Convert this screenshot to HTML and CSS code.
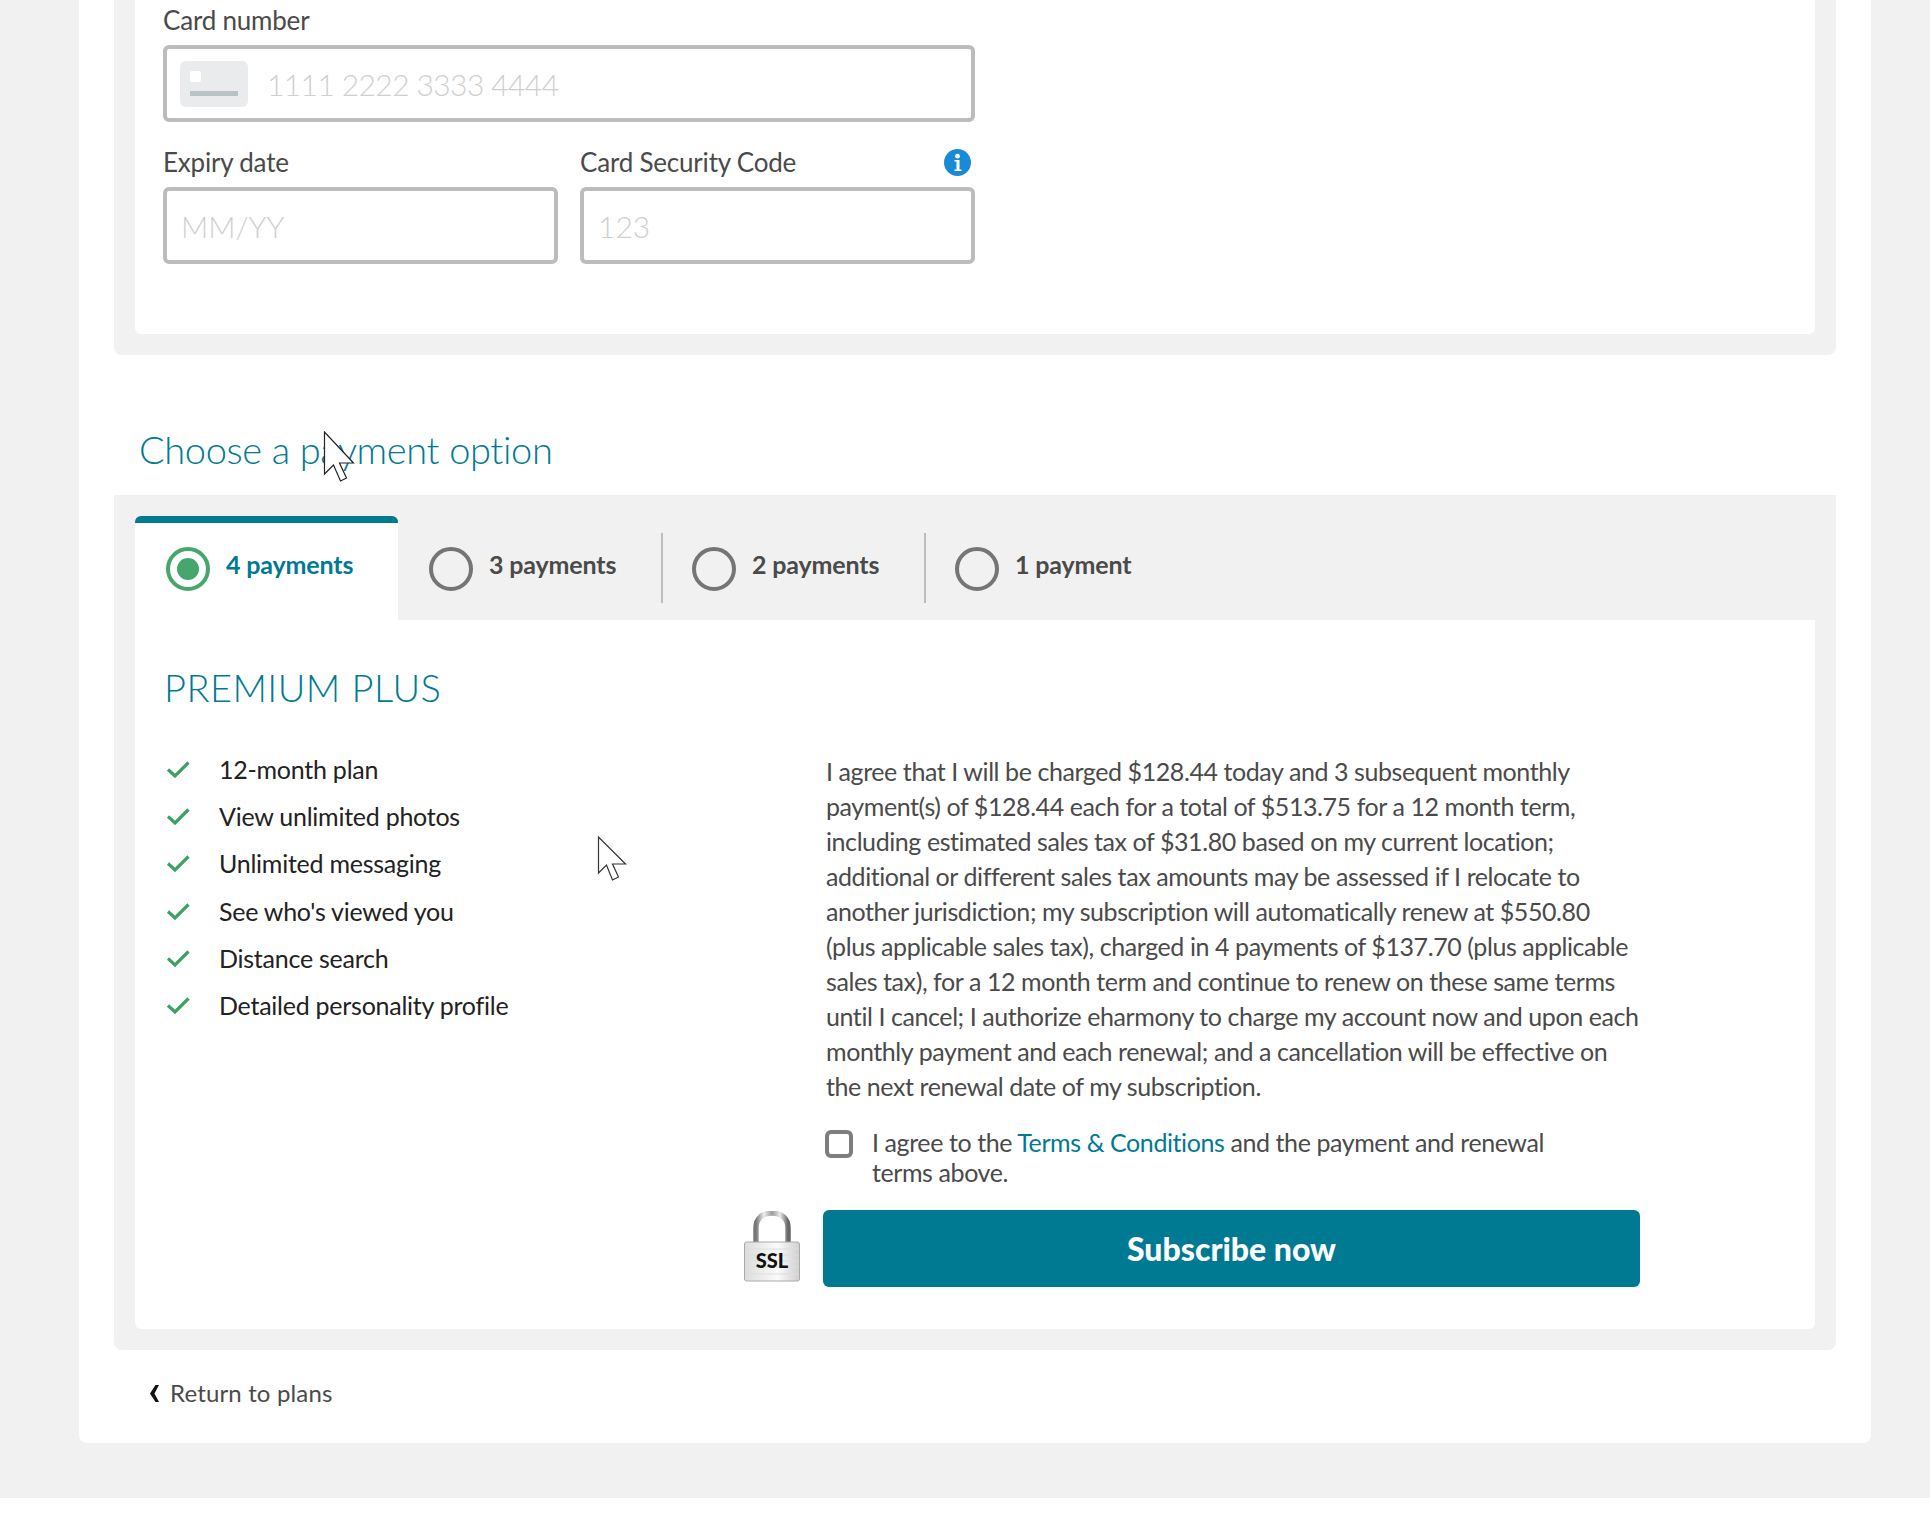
FILE: index.html
```html
<!DOCTYPE html>
<html lang="en">
<head>
<meta charset="utf-8">
<title>Payment</title>
<link rel="stylesheet" href="styles.css">
</head>
<body>
<div class="page">
  <main class="card">
    <section class="box box-card">
      <div class="inner inner-card">
        <div class="fields">
          <label class="lbl">Card number</label>
          <div class="input">
            <svg class="cc" width="68" height="46" viewBox="0 0 68 46"><rect width="68" height="46" rx="6" fill="#e9ebec"/><rect x="10" y="10" width="11" height="11" rx="2" fill="#fff"/><rect x="10" y="30" width="48" height="5" fill="#b9c3c6"/></svg>
            <span class="ph ph-num">1111 2222 3333 4444</span>
          </div>
          <div class="row2">
            <div class="col">
              <label class="lbl">Expiry date</label>
              <div class="input"><span class="ph">MM/YY</span></div>
            </div>
            <div class="col">
              <div class="lbl-row">
                <label class="lbl">Card Security Code</label>
                <svg class="info" width="27" height="27" viewBox="0 0 27 27"><circle cx="13.5" cy="13.5" r="13.5" fill="#1a8ad6"/><circle cx="13.5" cy="7.2" r="2.4" fill="#fff"/><path d="M10.500 11h5v9.500h2V22h-7v-1.500h2V12.500h-2z" fill="#fff"/></svg>
              </div>
              <div class="input"><span class="ph">123</span></div>
            </div>
          </div>
        </div>
      </div>
    </section>

    <h2 class="title">Choose a payment option</h2>

    <section class="box box-pay">
      <div class="tabs">
        <div class="tab active"><span class="radio on"></span><span class="tab-text">4 payments</span></div>
        <div class="tab"><span class="radio"></span><span class="tab-text">3 payments</span></div>
        <div class="tab sep"><span class="radio"></span><span class="tab-text">2 payments</span></div>
        <div class="tab sep"><span class="radio"></span><span class="tab-text">1 payment</span></div>
      </div>
      <div class="inner inner-pay">
        <h3 class="plan">PREMIUM PLUS</h3>
        <div class="cols">
          <ul class="feats">
            <li><svg class="chk" width="24" height="18" viewBox="0 0 24 18"><path d="M2 9.500l7 6.500L22.500 2.500" fill="none" stroke="#3fa066" stroke-width="3.200"/></svg>12-month plan</li>
            <li><svg class="chk" width="24" height="18" viewBox="0 0 24 18"><path d="M2 9.500l7 6.500L22.500 2.500" fill="none" stroke="#3fa066" stroke-width="3.200"/></svg>View unlimited photos</li>
            <li><svg class="chk" width="24" height="18" viewBox="0 0 24 18"><path d="M2 9.500l7 6.500L22.500 2.500" fill="none" stroke="#3fa066" stroke-width="3.200"/></svg>Unlimited messaging</li>
            <li><svg class="chk" width="24" height="18" viewBox="0 0 24 18"><path d="M2 9.500l7 6.500L22.500 2.500" fill="none" stroke="#3fa066" stroke-width="3.200"/></svg>See who's viewed you</li>
            <li><svg class="chk" width="24" height="18" viewBox="0 0 24 18"><path d="M2 9.500l7 6.500L22.500 2.500" fill="none" stroke="#3fa066" stroke-width="3.200"/></svg>Distance search</li>
            <li><svg class="chk" width="24" height="18" viewBox="0 0 24 18"><path d="M2 9.500l7 6.500L22.500 2.500" fill="none" stroke="#3fa066" stroke-width="3.200"/></svg>Detailed personality profile</li>
          </ul>
          <div class="side">
            <p class="legal">I agree that I will be charged $128.44 today and 3 subsequent monthly<br>payment(s) of $128.44 each for a total of $513.75 for a 12 month term,<br>including estimated sales tax of $31.80 based on my current location;<br>additional or different sales tax amounts may be assessed if I relocate to<br>another jurisdiction; my subscription will automatically renew at $550.80<br>(plus applicable sales tax), charged in 4 payments of $137.70 (plus applicable<br>sales tax), for a 12 month term and continue to renew on these same terms<br>until I cancel; I authorize eharmony to charge my account now and upon each<br>monthly payment and each renewal; and a cancellation will be effective on<br>the next renewal date of my subscription.</p>
            <div class="agree">
              <span class="cbx"></span>
              <span class="agree-text">I agree to the <a class="link" href="#">Terms &amp; Conditions</a> and the payment and renewal<br>terms above.</span>
            </div>
            <div class="submit">
              <div class="lock">
                <svg class="shackle" width="56" height="72" viewBox="0 0 56 72">
                  <defs>
                    <linearGradient id="steel" x1="0" x2="1" y1="0" y2="0"><stop offset="0" stop-color="#777"/><stop offset=".25" stop-color="#eee"/><stop offset=".5" stop-color="#9a9a9a"/><stop offset=".75" stop-color="#e8e8e8"/><stop offset="1" stop-color="#666"/></linearGradient>
                    <linearGradient id="body" x1="0" x2="1" y1="0" y2="0"><stop offset="0" stop-color="#dcdcdc"/><stop offset=".6" stop-color="#fbfbfb"/><stop offset="1" stop-color="#cfcfcf"/></linearGradient>
                  </defs>
                  <path d="M12 32V17C12 7 19 2 28 2s16 5 16 15v15" fill="none" stroke="url(#steel)" stroke-width="5.500"/>
                  <rect x=".5" y="31" width="55" height="39" rx="2" fill="url(#body)" stroke="#aaa"/>
                  <path d="M1 38h54M1 44h54M1 50h54M1 56h54M1 63h54" stroke="#ddd"/>
                </svg>
                <span class="ssl">SSL</span>
              </div>
              <button class="btn" type="button">Subscribe now</button>
            </div>
          </div>
        </div>
      </div>
    </section>

    <a class="back" href="#"><svg class="chev" width="9" height="17" viewBox="0 0 9 17"><path d="M5.500 0H9L4.500 8.500 9 17H5.500L0 8.500z" fill="#111"/></svg>Return to plans</a>
  </main>

  <svg class="cursor cursor-a" width="32" height="52" viewBox="0 0 32 52"><path d="M1.500 1v42l9-9 7 16 6-3-7-15h14z" fill="#fff" stroke="#222" stroke-width="1.200"/></svg>
  <svg class="cursor cursor-b" width="32" height="46" viewBox="0 0 32 46"><path d="M1.500 1v36l8-8 6 15 6-3-6-13h13z" fill="#fff" stroke="#333" stroke-width="1.200"/></svg>
</div>
<div class="foot"></div>
</body>
</html>
```
FILE: styles.css
```css
* { box-sizing: border-box; }
html, body { margin: 0; padding: 0; background: #fff; }
body { font-family: Lato, "Liberation Sans", sans-serif; color: #4a4a4a; }
.page { position: relative; height: 1498px; background: #f1f1f1; padding: 0 59px 0 79px; overflow: hidden; }
.foot { height: 21px; background: #fff; }
.card { background: #fff; height: 1443px; padding: 0 35px; border-radius: 0 0 8px 8px; display: flex; flex-direction: column; }
.box { background: #f1f1f1; border-radius: 0 0 8px 8px; padding: 0 21px 21px; }
.box-card { height: 355px; }
.inner { background: #fff; border-radius: 0 0 6px 6px; }
.inner-card { height: 334px; padding: 5px 28px 0; }
.fields { width: 812px; }
.lbl { display: block; font-size: 26px; line-height: 30px; color: #4a4a4a; letter-spacing: -.2px; margin-bottom: 10px; }
.input { height: 77px; border: 4px solid #bcbcbc; border-radius: 6px; display: flex; align-items: center; padding: 0 14px; background: #fff; }
.cc { margin: 0 19px 0 -1px; }
.ph { font-size: 30px; color: #cfcfcf; font-weight: 300; }
.ph-num { letter-spacing: -.6px; }
.row2 { display: flex; gap: 22px; margin-top: 25px; }
.col { flex: 1; }
.lbl-row { display: flex; justify-content: space-between; align-items: center; padding-right: 4px; margin-bottom: 10px; }
.lbl-row .lbl { margin-bottom: 0; }
.title { margin: 63px 0 0 25px; font-size: 38px; line-height: 62px; height: 77px; font-weight: 300; color: #007a93; letter-spacing: -.37px; }
.box-pay { margin-top: 0; padding-top: 21px; height: 855px; }
.tabs { display: flex; height: 104px; }
.tab { width: 263px; display: flex; align-items: flex-start; padding: 31px 0 0 31px; position: relative; }
.tab.active { background: #fff; border-top: 7px solid #007a93; border-radius: 6px 6px 0 0; padding-top: 24px; color: #007a93; }
.tab.sep::before { content: ""; position: absolute; left: 0; top: 17px; height: 70px; width: 2px; background: #bdbdbd; }
.radio { width: 44px; height: 44px; border: 4px solid #757575; border-radius: 50%; flex: none; display: flex; align-items: center; justify-content: center; }
.radio.on { border-color: #47a66b; }
.radio.on::after { content: ""; width: 22px; height: 22px; border-radius: 50%; background: #47a66b; }
.tab-text { font-weight: 700; font-size: 25px; letter-spacing: -.15px; line-height: 30px; margin-left: 16px; margin-top: 2px; }
.inner-pay { height: 709px; padding: 44px 29px 0; }
.plan { margin: 0; font-size: 38px; letter-spacing: .45px; line-height: 46px; font-weight: 300; color: #007a93; }
.cols { display: flex; margin-top: 35px; }
.feats { list-style: none; margin: 0; padding: 0; width: 580px; flex: none; }
.feats li { display: flex; align-items: center; height: 47.300px; font-size: 25px; letter-spacing: -.25px; color: #222; }
.chk { margin: 0 29px 0 2px; flex: none; }
.side { width: 896px; flex: none; padding-top: 9px; }
.legal { margin: 0 0 0 82px; font-size: 25px; line-height: 35px; letter-spacing: -.42px; white-space: nowrap; }
.agree { display: flex; margin: 23px 0 0 81px; align-items: flex-start; }
.cbx { width: 28px; height: 28px; border: 4px solid #7d7d7d; border-radius: 6px; flex: none; margin: 3px 19px 0 0; }
.agree-text { font-size: 25px; line-height: 30px; letter-spacing: -.41px; white-space: nowrap; }
.link { color: #007a93; text-decoration: none; }
.submit { display: flex; align-items: flex-start; margin-top: 23px; gap: 23px; }
.lock { position: relative; width: 56px; height: 72px; flex: none; margin-top: 1px; }
.shackle { display: block; }
.ssl { position: absolute; left: 0; right: 0; top: 37px; text-align: center; font-size: 20px; line-height: 24px; font-weight: 900; color: #111; }
.btn { flex: 1; height: 77px; background: #007a93; border: 0; border-radius: 6px; color: #fff; font: 900 32px Lato, "Liberation Sans", sans-serif; }
.back { display: flex; align-items: center; margin: 26px 0 0 36px; font-size: 24px; letter-spacing: .15px; line-height: 34px; color: #4a4a4a; text-decoration: none; }
.chev { margin-right: 11px; }
.cursor { position: absolute; }
.cursor-a { left: 323px; top: 431px; }
.cursor-b { left: 597px; top: 836px; }
```
